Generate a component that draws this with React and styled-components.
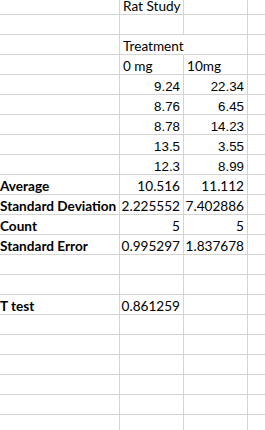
import styled, { createGlobalStyle } from 'styled-components'

const Global = createGlobalStyle`
  html, body {
    margin: 0;
    padding: 0;
    background: #ffffff;
    overflow: hidden;
  }
`

const Sheet = styled.div`
  display: grid;
  grid-template-columns: 120px 64px 64px 1fr;
  grid-auto-rows: 20px;
  margin-top: -5px;
  width: 100%;
  overflow: hidden;
`

const Cell = styled.div`
  box-sizing: border-box;
  display: flex;
  align-items: flex-end;
  justify-content: ${p => (p.$num ? 'flex-end' : 'flex-start')};
  padding: 0 ${p => (p.$first ? '0' : '3px')} 1px ${p => (p.$first ? '0' : '3px')};
  border-bottom: 1px solid #d4d4d4;
  border-right: ${p => (p.$spill ? '1px solid transparent' : '1px solid #d4d4d4')};
  font-family: ${p => (p.$arial ? '"Liberation Sans", Arial, sans-serif' : 'Lato, "Open Sans", sans-serif')};
  font-size: ${p => (p.$arial ? '13.3px' : '13.6px')};
  font-weight: ${p => (p.$bold ? 700 : 400)};
  color: #000000;
  white-space: nowrap;
  overflow: visible;
  line-height: 13px;
`

// rows: [label, colB, colC]; numbers in a column are right aligned
const rows = [
  ['', { t: 'Rat Study' }, null],
  ['', null, null],
  ['', { t: 'Treatment', spill: true }, null],
  ['', { t: '0 mg' }, { t: '10mg' }],
  ['', { t: '9.24', num: true, arial: true }, { t: '22.34', num: true, arial: true }],
  ['', { t: '8.76', num: true, arial: true }, { t: '6.45', num: true, arial: true }],
  ['', { t: '8.78', num: true, arial: true }, { t: '14.23', num: true, arial: true }],
  ['', { t: '13.5', num: true, arial: true }, { t: '3.55', num: true, arial: true }],
  ['', { t: '12.3', num: true, arial: true }, { t: '8.99', num: true, arial: true }],
  ['Average', { t: '10.516', num: true }, { t: '11.112', num: true }],
  ['Standard Deviation', { t: '2.225552', num: true }, { t: '7.402886', num: true }],
  ['Count', { t: '5', num: true }, { t: '5', num: true }],
  ['Standard Error', { t: '0.995297', num: true }, { t: '1.837678', num: true }],
  ['', null, null],
  ['', null, null],
  ['T test', { t: '0.861259', num: true }, null],
  ['', null, null],
  ['', null, null],
  ['', null, null],
  ['', null, null],
  ['', null, null],
  ['', null, null],
]

const Data = ({ c }) => (
  <Cell $num={c && c.num} $arial={c && c.arial} $spill={c && c.spill}>
    {c ? c.t : ''}
  </Cell>
)

export default function App() {
  return (
    <>
      <Global />
      <Sheet>
        {rows.map((r, i) => [
          <Cell key={i + 'a'} $first $bold>{r[0]}</Cell>,
          <Data key={i + 'b'} c={r[1]} />,
          <Data key={i + 'c'} c={r[2]} />,
          <Cell key={i + 'd'} />,
        ])}
      </Sheet>
    </>
  )
}
